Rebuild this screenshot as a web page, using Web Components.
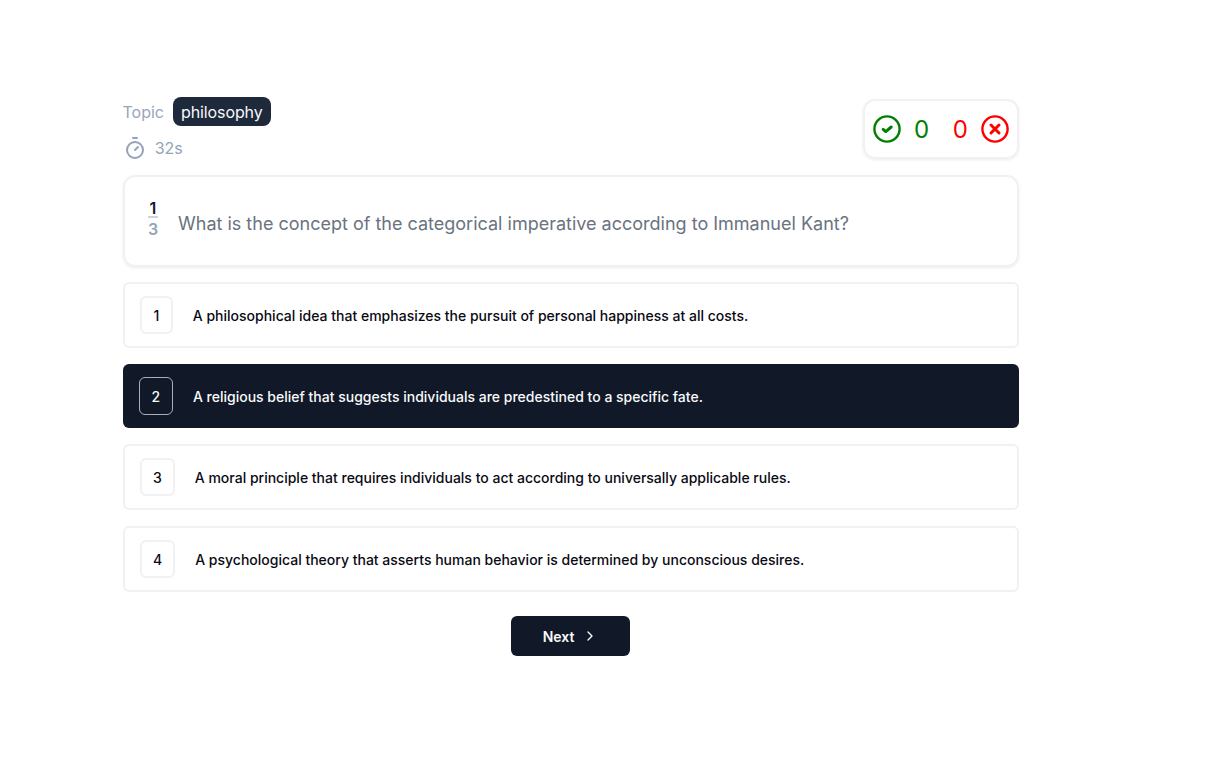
<!DOCTYPE html>
<html>
<head>
<meta charset="utf-8">
<style>
  html, body { margin: 0; background: #fff; }
  body { font-family: Inter, "Liberation Sans", sans-serif; }
</style>
</head>
<body>
<quiz-page>
  <quiz-header topic="philosophy" time="32s" correct="0" wrong="0"></quiz-header>
  <question-card index="1" total="3">What is the concept of the categorical imperative according to Immanuel Kant?</question-card>
  <option-row key="1">A philosophical idea that emphasizes the pursuit of personal happiness at all costs.</option-row>
  <option-row key="2" selected>A religious belief that suggests individuals are predestined to a specific fate.</option-row>
  <option-row key="3">A moral principle that requires individuals to act according to universally applicable rules.</option-row>
  <option-row key="4">A psychological theory that asserts human behavior is determined by unconscious desires.</option-row>
  <next-button>Next</next-button>
</quiz-page>
<script>
customElements.define('quiz-page',
  class extends HTMLElement {
    constructor() {
      super()
      this.attachShadow({ mode: 'open' })
      this.shadowRoot.innerHTML = `
        <style>
          :host {
            display: flex;
            flex-direction: column;
            width: 896px;
            margin-left: 123px;
            padding-top: 97px;
          }
        </style>
        <slot></slot>
      `
    }
  }
)

customElements.define('quiz-header',
  class extends HTMLElement {
    constructor() {
      super()
      this.attachShadow({ mode: 'open' })
      this.shadowRoot.innerHTML = `
        <style>
          :host {
            display: flex;
            justify-content: space-between;
            align-items: flex-start;
            height: 78px;
            color: #94a3b8;
          }
          .topic { display: flex; align-items: center; gap: 9px; margin-left: -0.5px; font-size: 16px; height: 29px; color: #9ca3bb; }
          .badge {
            background: #1e293b;
            color: #f8fafc;
            border-radius: 8px;
            padding: 0 8px;
            height: 29px;
            line-height: 30px;
            letter-spacing: -0.1px;
            box-sizing: border-box;
          }
          .timer { display: flex; align-items: center; gap: 8px; margin-top: 9px; height: 26px; font-size: 16px; margin-left: -0.3px; }
          .score {
            box-sizing: border-box;
            display: flex;
            align-items: center;
            width: 156px;
            height: 60px;
            margin-top: 2.4px;
            padding: 0 8px;
            border: 2px solid #f1f1f3;
            border-radius: 12px;
            box-shadow: 0 1px 3px rgba(0, 0, 0, .08);
            font-size: 24px;
          }
          .score svg { display: block; flex: none; }
          .good { color: #008000; margin-left: 13px; }
          .bad { color: #ff0000; margin-left: auto; margin-right: 13px; }
        </style>
        <div>
          <div class="topic"><span>Topic</span><span class="badge">${this.getAttribute('topic')}</span></div>
          <div class="timer">
            <svg width="24" height="24" viewBox="0 0 24 24" fill="none" stroke="#94a3b8" stroke-width="2" stroke-linecap="round" stroke-linejoin="round">
              <line x1="10" y1="2" x2="14" y2="2"></line>
              <line x1="12" y1="14" x2="15" y2="11"></line>
              <circle cx="12" cy="14" r="8"></circle>
            </svg>
            <span>${this.getAttribute('time')}</span>
          </div>
        </div>
        <div class="score">
          <svg width="28" height="28" viewBox="0 0 28 28" fill="none" stroke="#008000">
            <circle cx="14" cy="14" r="12.6" stroke-width="2.4"></circle>
            <path d="M10.2 14.4l2.6 2.2 5.4-4.6" stroke-width="3" stroke-linecap="round" stroke-linejoin="round"></path>
          </svg>
          <span class="good">${this.getAttribute('correct')}</span>
          <span class="bad">${this.getAttribute('wrong')}</span>
          <svg width="28" height="28" viewBox="0 0 28 28" fill="none" stroke="#ff0000">
            <circle cx="14" cy="14" r="12.6" stroke-width="2.4"></circle>
            <path d="M10 10l8 8M18 10l-8 8" stroke-width="3" stroke-linecap="round"></path>
          </svg>
        </div>
      `
    }
  }
)

customElements.define('question-card',
  class extends HTMLElement {
    constructor() {
      super()
      this.attachShadow({ mode: 'open' })
      this.shadowRoot.innerHTML = `
        <style>
          :host {
            display: flex;
            align-items: center;
            box-sizing: border-box;
            height: 91.6px;
            margin-bottom: -0.2px;
            padding: 0 23px;
            border: 2px solid #f1f1f3;
            border-radius: 12px;
            box-shadow: 0 1px 3px rgba(0, 0, 0, .08);
          }
          .count {
            width: 10px;
            margin-right: 20px;
            font-size: 16px;
            font-weight: 600;
            text-align: center;
            margin-top: -1px;
          }
          .num { color: #0f172a; border-bottom: 2px solid #cbd5e1; line-height: 15px; height: 15px; }
          .total { color: #94a3b8; line-height: 19px; margin-top: 2px; }
          .text { font-size: 18px; color: #6b7280; margin-top: 6px; }
        </style>
        <div class="count">
          <div class="num">${this.getAttribute('index')}</div>
          <div class="total">${this.getAttribute('total')}</div>
        </div>
        <div class="text"><slot></slot></div>
      `
    }
  }
)

customElements.define('option-row',
  class extends HTMLElement {
    constructor() {
      super()
      this.attachShadow({ mode: 'open' })
      this.shadowRoot.innerHTML = `
        <style>
          :host {
            display: flex;
            align-items: center;
            box-sizing: border-box;
            height: 66px;
            margin-top: 16px;
            padding: 0 15px;
            border: 2px solid #f1f1f3;
            border-radius: 6px;
            color: #0a0a14;
            font-size: 14px;
            font-weight: 500;
          }
          :host([selected]) {
            height: 64px;
            border: 0;
            padding: 0 16px;
            background: #111827;
            color: #f8fafc;
          }
          .key {
            flex: none;
            box-sizing: border-box;
            min-width: 32.8px;
            height: 38px;
            display: flex;
            align-items: center;
            justify-content: center;
            padding: 0 11px;
            border: 2px solid #f1f1f3;
            border-radius: 6px;
            margin-right: 20px;
          }
          :host([selected]) .key { border: 1px solid #aab0ba; padding: 0 11.5px; margin-right: 20.3px; }
        </style>
        <div class="key">${this.getAttribute('key')}</div>
        <div class="text"><slot></slot></div>
      `
    }
  }
)

customElements.define('next-button',
  class extends HTMLElement {
    constructor() {
      super()
      this.attachShadow({ mode: 'open' })
      this.shadowRoot.innerHTML = `
        <style>
          :host {
            align-self: flex-start;
            display: flex;
            align-items: center;
            justify-content: center;
            gap: 8px;
            box-sizing: border-box;
            width: 119px;
            height: 40px;
            margin-top: 24px;
            margin-left: 388px;
            background: #111827;
            color: #f8fafc;
            border-radius: 6px;
            font-size: 14px;
            font-weight: 600;
          }
          svg { display: block; }
        </style>
        <slot></slot>
        <svg width="16" height="16" viewBox="0 0 24 24" fill="none" stroke="currentColor" stroke-width="2" stroke-linecap="round" stroke-linejoin="round">
          <path d="M9 18l6-6-6-6"></path>
        </svg>
      `
    }
  }
)
</script>
</body>
</html>
